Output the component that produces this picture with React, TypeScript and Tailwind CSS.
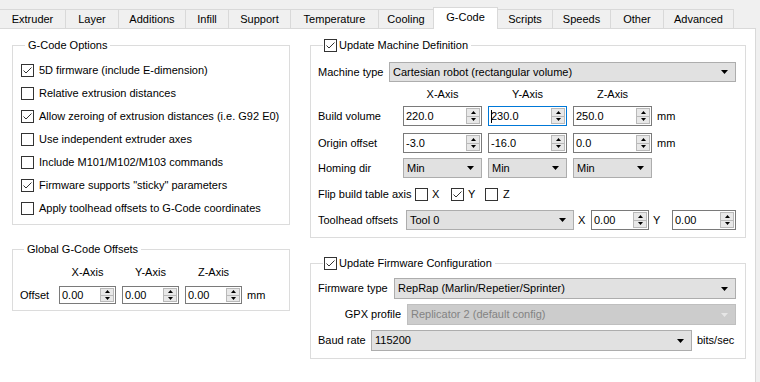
import React from "react";

const tabs = [
  { label: "Extruder", w: "w-[67px]" },
  { label: "Layer", w: "w-[54px]" },
  { label: "Additions", w: "w-[68px]" },
  { label: "Infill", w: "w-[44px]" },
  { label: "Support", w: "w-[63px]" },
  { label: "Temperature", w: "w-[89px]" },
  { label: "Cooling", w: "w-[56px]" },
  { label: "G-Code", w: "w-[65px]", active: true },
  { label: "Scripts", w: "w-[56px]" },
  { label: "Speeds", w: "w-[59px]" },
  { label: "Other", w: "w-[54px]" },
  { label: "Advanced", w: "w-[71px]" },
];

const options = [
  { label: "5D firmware (include E-dimension)", checked: true },
  { label: "Relative extrusion distances", checked: false },
  { label: "Allow zeroing of extrusion distances (i.e. G92 E0)", checked: true },
  { label: "Use independent extruder axes", checked: false },
  { label: "Include M101/M102/M103 commands", checked: false },
  { label: 'Firmware supports "sticky" parameters', checked: true },
  { label: "Apply toolhead offsets to G-Code coordinates", checked: false },
];

const Check = ({ checked }: { checked?: boolean }) => (
  <span className="w-[13px] h-[13px] shrink-0 border border-[#333] bg-white flex items-center justify-center">
    {checked && (
      <svg width="11" height="11" viewBox="0 0 11 11">
        <path d="M1.5 5.5 L4 8 L9.5 2.5" fill="none" stroke="#333" strokeWidth="1" />
      </svg>
    )}
  </span>
);

const Arrow = ({ up, color = "#000" }: { up?: boolean; color?: string }) => (
  <svg width="5" height="3" viewBox="0 0 5 3">
    <path d={up ? "M0 3 L2.5 0 L5 3 Z" : "M0 0 L5 0 L2.5 3 Z"} fill={color} />
  </svg>
);

const Spin = ({
  value,
  className,
  focus,
}: {
  value: string;
  className: string;
  focus?: boolean;
}) => (
  <div
    className={`flex shrink-0 bg-white border ${focus ? "border-[#0078d7]" : "border-[#7a7a7a]"} ${className}`}
  >
    <div className="flex-1 flex items-center pl-[2px]">
      {focus && <span className="w-px h-[13px] bg-black -mr-px" />}
      {value}
    </div>
    <div className="w-[14px] flex flex-col my-px mr-px">
      <div className="flex-1 border border-[#b9b9b9] bg-[#e8e8e8] flex items-center justify-center">
        <Arrow up />
      </div>
      <div className="flex-1 -mt-px border border-[#b9b9b9] bg-[#e8e8e8] flex items-center justify-center">
        <Arrow />
      </div>
    </div>
  </div>
);

const Combo = ({
  text,
  className,
  disabled,
}: {
  text: string;
  className: string;
  disabled?: boolean;
}) => (
  <div
    className={`flex items-center shrink-0 pl-[3px] pr-[7px] border ${
      disabled ? "bg-[#cccccc] border-[#bfbfbf] text-[#838383]" : "bg-[#e1e1e1] border-[#adadad]"
    } ${className}`}
  >
    <span className="flex-1 whitespace-nowrap">{text}</span>
    <svg width="7" height="4" viewBox="0 0 7 4">
      <path d="M0 0 L7 0 L3.5 4 Z" fill={disabled ? "#e6e6e6" : "#000"} />
    </svg>
  </div>
);

const Title = ({ children }: { children: React.ReactNode }) => (
  <legend className="ml-[4px] px-[3px] leading-[14px] h-[14px]">{children}</legend>
);

const CheckTitle = ({ children }: { children: React.ReactNode }) => (
  <legend className="ml-[5px] pl-px pr-[3px] h-[14px] leading-[14px]">
    <span className="flex items-center gap-[2px]">
      <Check checked />
      {children}
    </span>
  </legend>
);

export default function App() {
  return (
    <div className="w-[760px] h-[382px] overflow-hidden bg-[#f0f0f0] text-black text-[11px] leading-[13px] font-['Liberation_Sans',Arial,sans-serif]">
      {/* tab strip */}
      <div className="flex items-end h-[28px] -ml-px">
        {tabs.map((t) =>
          t.active ? (
            <div
              key={t.label}
              className={`${t.w} h-[22px] -mb-px -mr-px relative z-10 bg-white border border-b-0 border-[#d9d9d9] flex items-center justify-center pb-[2px]`}
            >
              {t.label}
            </div>
          ) : (
            <div
              key={t.label}
              className={`${t.w} h-[19px] -mr-px bg-[#f0f0f0] border border-b-0 border-[#d9d9d9] flex items-center justify-center`}
            >
              {t.label}
            </div>
          )
        )}
      </div>

      {/* pane */}
      <div className="w-[756px] h-[354px] bg-white border-t border-r border-[#d9d9d9] flex items-start pl-[12px] pt-[9px]">
        {/* left column */}
        <div className="w-[278px] flex flex-col">
          <fieldset className="border border-[#dcdcdc] pl-[8px] pt-[7px] pb-[4px]">
            <Title>G-Code Options</Title>
            {options.map((o) => (
              <div key={o.label} className="h-[23px] flex items-center gap-[5px]">
                <Check checked={o.checked} />
                <span className="whitespace-nowrap">{o.label}</span>
              </div>
            ))}
          </fieldset>

          <fieldset className="mt-[17px] border border-[#dcdcdc] pl-[7px] pt-[9px] pb-[6px]">
            <Title>Global G-Code Offsets</Title>
            <div className="flex pl-[39px] gap-[6px] h-[14px] items-center">
              <span className="w-[57px] text-center">X-Axis</span>
              <span className="w-[57px] text-center">Y-Axis</span>
              <span className="w-[57px] text-center">Z-Axis</span>
            </div>
            <div className="mt-[7px] flex items-center">
              <span className="w-[39px]">Offset</span>
              <div className="flex gap-[6px]">
                <Spin value="0.00" className="w-[57px] h-[18px]" />
                <Spin value="0.00" className="w-[57px] h-[18px]" />
                <Spin value="0.00" className="w-[57px] h-[18px]" />
              </div>
              <span className="ml-[5px]">mm</span>
            </div>
          </fieldset>
        </div>

        {/* right column */}
        <div className="w-[436px] ml-[20px] flex flex-col">
          <fieldset className="border border-[#dcdcdc] pl-[7px] pr-[9px] pt-[10px] pb-[7px]">
            <CheckTitle>Update Machine Definition</CheckTitle>
            <div className="flex items-center">
              <span className="w-[71px]">Machine type</span>
              <Combo text="Cartesian robot (rectangular volume)" className="flex-1 h-[20px]" />
            </div>
            <div className="mt-[5px] h-[14px] flex items-center pl-[85px] gap-[6px]">
              <span className="w-[79px] text-center">X-Axis</span>
              <span className="w-[79px] text-center">Y-Axis</span>
              <span className="w-[79px] text-center">Z-Axis</span>
            </div>
            <div className="mt-[5px] flex items-center">
              <span className="w-[85px]">Build volume</span>
              <div className="flex gap-[6px]">
                <Spin value="220.0" className="w-[79px] h-[20px]" />
                <Spin value="230.0" className="w-[79px] h-[20px]" focus />
                <Spin value="250.0" className="w-[79px] h-[20px]" />
              </div>
              <span className="ml-[5px]">mm</span>
            </div>
            <div className="mt-[7px] flex items-center">
              <span className="w-[85px]">Origin offset</span>
              <div className="flex gap-[6px]">
                <Spin value="-3.0" className="w-[79px] h-[20px]" />
                <Spin value="-16.0" className="w-[79px] h-[20px]" />
                <Spin value="0.0" className="w-[79px] h-[20px]" />
              </div>
              <span className="ml-[5px]">mm</span>
            </div>
            <div className="mt-[5px] flex items-center">
              <span className="w-[85px]">Homing dir</span>
              <div className="flex gap-[6px]">
                <Combo text="Min" className="w-[79px] h-[20px]" />
                <Combo text="Min" className="w-[79px] h-[20px]" />
                <Combo text="Min" className="w-[79px] h-[20px]" />
              </div>
            </div>
            <div className="mt-[9px] h-[14px] flex items-center">
              <span className="w-[97px] whitespace-nowrap">Flip build table axis</span>
              <Check />
              <span className="ml-[4px] w-[19px]">X</span>
              <Check checked />
              <span className="ml-[4px] w-[17px]">Y</span>
              <Check />
              <span className="ml-[5px]">Z</span>
            </div>
            <div className="mt-[9px] flex items-center">
              <span className="w-[88px] whitespace-nowrap">Toolhead offsets</span>
              <Combo text="Tool 0" className="w-[168px] h-[20px]" />
              <span className="ml-[4px] w-[13px]">X</span>
              <Spin value="0.00" className="w-[58px] h-[20px]" />
              <span className="ml-[4px] w-[19px]">Y</span>
              <Spin value="0.00" className="w-[64px] h-[20px]" />
            </div>
          </fieldset>

          <fieldset className="mt-[18px] border border-[#dcdcdc] pl-[7px] pr-[9px] pt-[8px] pb-[7px]">
            <CheckTitle>Update Firmware Configuration</CheckTitle>
            <div className="flex items-center">
              <span className="w-[76px] whitespace-nowrap">Firmware type</span>
              <Combo text="RepRap (Marlin/Repetier/Sprinter)" className="flex-1 h-[21px]" />
            </div>
            <div className="mt-[5px] flex items-center">
              <span className="w-[89px] text-right pr-[6px]">GPX profile</span>
              <Combo text="Replicator 2 (default config)" className="flex-1 h-[21px]" disabled />
            </div>
            <div className="mt-[5px] flex items-center">
              <span className="w-[53px]">Baud rate</span>
              <Combo text="115200" className="w-[321px] h-[21px]" />
              <span className="ml-[5px] whitespace-nowrap">bits/sec</span>
            </div>
          </fieldset>
        </div>
      </div>
    </div>
  );
}
